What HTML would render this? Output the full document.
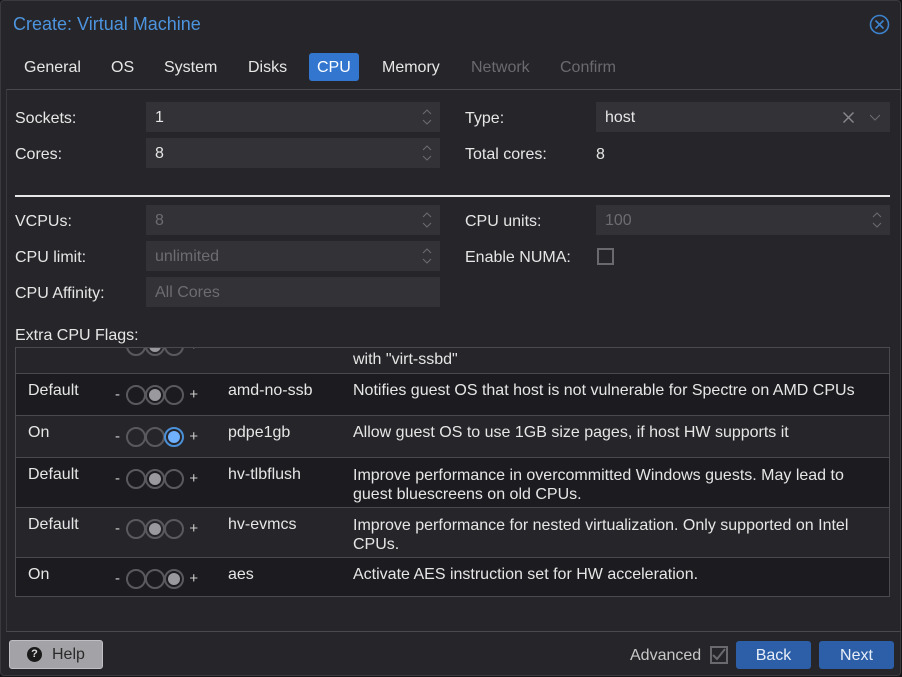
<!DOCTYPE html>
<html><head><style>
*{box-sizing:border-box;margin:0;padding:0}
body{width:902px;height:677px;background:#151417;font-family:"Liberation Sans",sans-serif;font-size:16px;color:#e6e6e6;position:relative;overflow:hidden}
.dlg{position:absolute;left:0;top:0;width:901px;height:676px;background:#262529;box-shadow:inset 0 0 0 1px #3a393d;border-radius:4px}
.a{position:absolute;white-space:nowrap}
.inp{position:absolute;background:#333237;height:30px;padding:8px 9px;line-height:16px}
.dis{color:#6d6c70}
.spin{position:absolute;right:8px;top:6px;width:10px;height:18px}
.tab{position:absolute;top:54px;height:28px;line-height:28px;padding:0 9px;font-size:16px}
.c{display:inline-block;width:20px;height:20px;border:2px solid #5a595d;border-radius:50%;vertical-align:middle;margin-right:-1px;position:relative}
.c.g::after{content:"";position:absolute;left:2px;top:2px;width:12px;height:12px;border-radius:50%;background:#9a999d}
.c.b{border-color:#4a90d9}.c.b::after{content:"";position:absolute;left:2px;top:2px;width:12px;height:12px;border-radius:50%;background:#6fb0ff}
.btn{position:absolute;top:641px;height:28px;width:75px;background:#2c5fa8;border-radius:3px;text-align:center;line-height:28px;color:#e8eef8}
.tg{left:99px;top:11px;color:#ccc;font-size:15px;word-spacing:2px}
.r .a{}
</style></head><body>
<div class="dlg">
<div class="a" style="left:13px;top:14px;font-size:18px;color:#4d94de">Create: Virtual Machine</div>
<svg class="a" style="left:869px;top:14px" width="21" height="21" viewBox="0 0 21 21"><circle cx="10.5" cy="10.5" r="9" fill="none" stroke="#3d82cc" stroke-width="1.6"/><path d="M6.5 6.5L14.5 14.5M14.5 6.5L6.5 14.5" stroke="#3d82cc" stroke-width="1.6"/></svg>
<div class="tab" style="left:15px">General</div>
<div class="tab" style="left:102px">OS</div>
<div class="tab" style="left:155px">System</div>
<div class="tab" style="left:239px">Disks</div>
<div class="tab" style="left:309px;top:53px;background:#3276d0;border-radius:3px;color:#fff;padding:0 8px;line-height:30px">CPU</div>
<div class="tab" style="left:373px">Memory</div>
<div class="tab" style="left:462px;color:#6b6a6e">Network</div>
<div class="tab" style="left:551px;color:#6b6a6e">Confirm</div>
<div class="a" style="left:6px;top:89px;width:895px;height:543px;border-top:1px solid #4a494d;border-left:1px solid #3a393d;border-bottom:1px solid #4a494d"></div>

<div class="a" style="left:15px;top:110px">Sockets:</div>
<div class="inp" style="left:146px;top:102px;width:294px">1<svg class="spin" viewBox="0 0 10 18"><path d="M1 6L5 2L9 6M1 12L5 16L9 12" fill="none" stroke="#6d6c70"/></svg></div>
<div class="a" style="left:15px;top:146px">Cores:</div>
<div class="inp" style="left:146px;top:138px;width:294px">8<svg class="spin" viewBox="0 0 10 18"><path d="M1 6L5 2L9 6M1 12L5 16L9 12" fill="none" stroke="#6d6c70"/></svg></div>
<div class="a" style="left:465px;top:110px">Type:</div>
<div class="inp" style="left:596px;top:102px;width:294px">host<svg style="position:absolute;right:36px;top:10px" width="11" height="11"><path d="M0.5 0.5L10.5 10.5M10.5 0.5L0.5 10.5" stroke="#8a898d" stroke-width="1.4"/></svg><svg style="position:absolute;right:10px;top:12px" width="10" height="7"><path d="M0 1L5 6L10 1" fill="none" stroke="#6d6c70"/></svg></div>
<div class="a" style="left:465px;top:146px">Total cores:</div>
<div class="a" style="left:596px;top:146px">8</div>
<div class="a" style="left:15px;top:195px;width:875px;height:2px;background:#e6e6e6"></div>

<div class="a" style="left:15px;top:213px">VCPUs:</div>
<div class="inp dis" style="left:146px;top:205px;width:294px">8<svg class="spin" viewBox="0 0 10 18"><path d="M1 6L5 2L9 6M1 12L5 16L9 12" fill="none" stroke="#6d6c70"/></svg></div>
<div class="a" style="left:15px;top:249px">CPU limit:</div>
<div class="inp dis" style="left:146px;top:241px;width:294px">unlimited<svg class="spin" viewBox="0 0 10 18"><path d="M1 6L5 2L9 6M1 12L5 16L9 12" fill="none" stroke="#6d6c70"/></svg></div>
<div class="a" style="left:15px;top:285px">CPU Affinity:</div>
<div class="inp dis" style="left:146px;top:277px;width:294px">All Cores</div>
<div class="a" style="left:465px;top:213px">CPU units:</div>
<div class="inp dis" style="left:596px;top:205px;width:294px">100<svg class="spin" viewBox="0 0 10 18"><path d="M1 6L5 2L9 6M1 12L5 16L9 12" fill="none" stroke="#6d6c70"/></svg></div>
<div class="a" style="left:465px;top:249px">Enable NUMA:</div>
<div class="a" style="left:597px;top:248px;width:17px;height:17px;border:2px solid #6a696d"></div>

<div class="a" style="left:15px;top:327px">Extra CPU Flags:</div>
<div class="a" style="left:15px;top:347px;width:875px;height:250px;border:1px solid #4a494d;overflow:hidden;background:#262529">
 <div style="position:absolute;left:0;top:0;width:873px;height:25px;background:#262529"><div class="a tg" style="top:-12px;color:#999">- <span class="c"></span><span class="c g"></span><span class="c"></span> +</div><div class="a" style="left:337px;top:3px">with "virt-ssbd"</div></div>
 <div style="position:absolute;left:0;top:25px;width:873px;height:42px;background:#1c1b1f;border-top:1px solid #4a494d"><div class="a" style="left:12px;top:8px">Default</div><div class="a tg">- <span class="c"></span><span class="c g"></span><span class="c"></span> +</div><div class="a" style="left:212px;top:8px">amd-no-ssb</div><div class="a" style="left:337px;top:8px">Notifies guest OS that host is not vulnerable for Spectre on AMD CPUs</div></div>
 <div style="position:absolute;left:0;top:67px;width:873px;height:42px;background:#262529;border-top:1px solid #4a494d"><div class="a" style="left:12px;top:8px">On</div><div class="a tg">- <span class="c"></span><span class="c"></span><span class="c b"></span> +</div><div class="a" style="left:212px;top:8px">pdpe1gb</div><div class="a" style="left:337px;top:8px">Allow guest OS to use 1GB size pages, if host HW supports it</div></div>
 <div style="position:absolute;left:0;top:109px;width:873px;height:50px;background:#1c1b1f;border-top:1px solid #4a494d"><div class="a" style="left:12px;top:8px">Default</div><div class="a tg">- <span class="c"></span><span class="c g"></span><span class="c"></span> +</div><div class="a" style="left:212px;top:8px">hv-tlbflush</div><div class="a" style="left:337px;top:8px;line-height:19px">Improve performance in overcommitted Windows guests. May lead to<br>guest bluescreens on old CPUs.</div></div>
 <div style="position:absolute;left:0;top:159px;width:873px;height:50px;background:#262529;border-top:1px solid #4a494d"><div class="a" style="left:12px;top:8px">Default</div><div class="a tg">- <span class="c"></span><span class="c g"></span><span class="c"></span> +</div><div class="a" style="left:212px;top:8px">hv-evmcs</div><div class="a" style="left:337px;top:8px;line-height:19px">Improve performance for nested virtualization. Only supported on Intel<br>CPUs.</div></div>
 <div style="position:absolute;left:0;top:209px;width:873px;height:42px;background:#1c1b1f;border-top:1px solid #4a494d"><div class="a" style="left:12px;top:8px">On</div><div class="a tg">- <span class="c"></span><span class="c"></span><span class="c g"></span> +</div><div class="a" style="left:212px;top:8px">aes</div><div class="a" style="left:337px;top:8px">Activate AES instruction set for HW acceleration.</div></div>
</div>

<div class="a" style="left:9px;top:640px;width:94px;height:29px;background:#a3a2a6;border:1px solid #c0bfc3;border-radius:3px;color:#2a2a2a;display:flex;align-items:center;padding-left:17px"><span style="display:inline-block;width:15px;height:15px;border-radius:50%;background:#1a1a1a;color:#ddd;font-size:11px;font-weight:bold;text-align:center;line-height:15px;margin-right:10px">?</span>Help</div>
<div class="a" style="left:630px;top:647px;color:#c8c8c8">Advanced</div>
<svg class="a" style="left:710px;top:646px" width="18" height="18"><rect x="1" y="1" width="16" height="16" fill="none" stroke="#6a696d" stroke-width="2"/><path d="M3 9L7 13L15 3" fill="none" stroke="#6a696d" stroke-width="2"/></svg>
<div class="btn" style="left:736px;top:641px;line-height:29px">Back</div>
<div class="btn" style="left:819px;top:641px;line-height:29px">Next</div>
</div>
</body></html>
